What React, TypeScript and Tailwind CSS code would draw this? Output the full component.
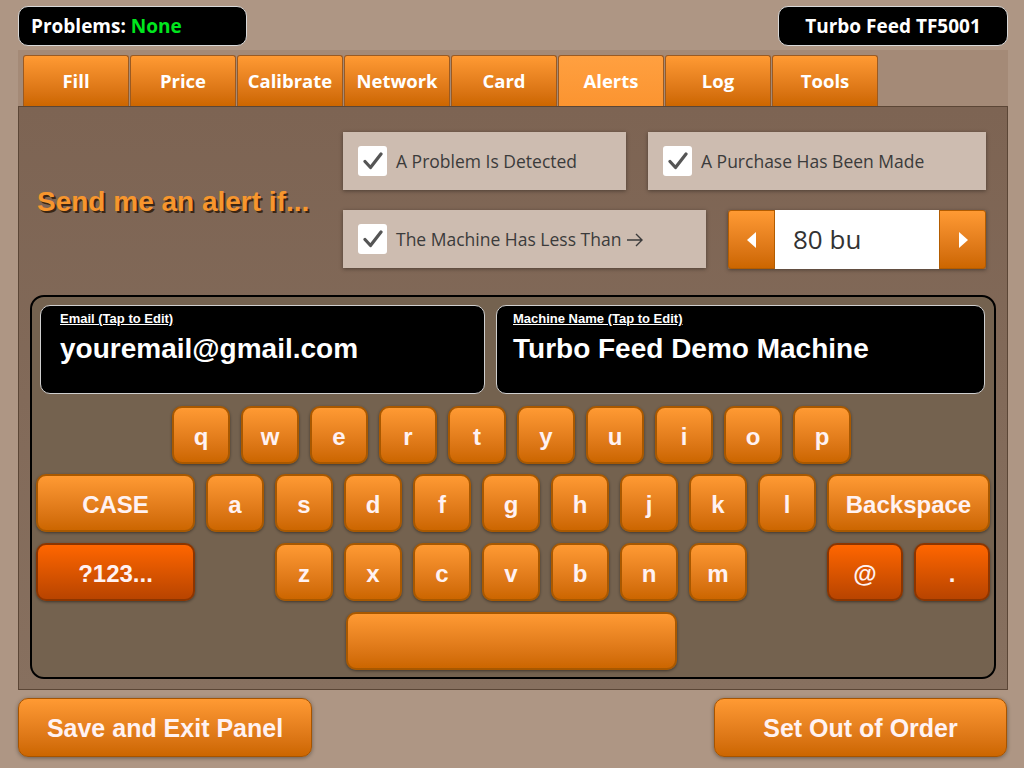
import React from "react";

const sego = { fontFamily: '"Open Sans", "Noto Sans", Arial, sans-serif' };
const arial = { fontFamily: '"Liberation Sans", Arial, sans-serif' };

function Key({ label, w = 58, red = false }: { label: string; w?: number; red?: boolean }) {
  return (
    <div
      style={{ width: w }}
      className={
        "h-[58px] shrink-0 rounded-[10px] border-2 flex items-center justify-center pt-[3px] text-[24px] font-bold text-[#fff2f2] shadow-[0_1px_3px_rgba(0,0,0,0.45)] " +
        (red
          ? "border-[#8c3500] bg-gradient-to-b from-[#ff6600] to-[#b84400]"
          : "border-[#a85800] bg-gradient-to-b from-[#ff9a33] to-[#cc6600]")
      }
    >
      {label}
    </div>
  );
}

function Spacer({ w }: { w: number }) {
  return <div style={{ width: w }} className="shrink-0" />;
}

function Check({ label, w, arrow = false }: { label: string; w: number; arrow?: boolean }) {
  return (
    <div
      style={{ width: w }}
      className="h-[58px] shrink-0 bg-[#cdbcb0] shadow-[0_1px_4px_rgba(0,0,0,0.4)] flex items-center pl-[15px] gap-[9px]"
    >
      <div className="w-[29px] h-[30px] bg-white rounded-[3px] flex items-center justify-center">
        <svg width="20" height="18" viewBox="0 0 20 18">
          <path d="M2 9.5 L7.5 15.5 L18 2" fill="none" stroke="#555" strokeWidth="3.2" strokeLinecap="round" strokeLinejoin="round" />
        </svg>
      </div>
      <span style={sego} className="text-[17.5px] text-[#3b3b3b] flex items-center">
        {label}
        {arrow && (
          <svg width="18" height="14" viewBox="0 0 18 14" className="ml-[5px] mt-[2px]">
            <path d="M1 7 H16 M10 1 L16 7 L10 13" fill="none" stroke="#3b3b3b" strokeWidth="1.4" />
          </svg>
        )}
      </span>
    </div>
  );
}

export default function App() {
  const tabs = ["Fill", "Price", "Calibrate", "Network", "Card", "Alerts", "Log", "Tools"];
  const row1 = ["q", "w", "e", "r", "t", "y", "u", "i", "o", "p"];
  const row2 = ["a", "s", "d", "f", "g", "h", "j", "k", "l"];
  const row3 = ["z", "x", "c", "v", "b", "n", "m"];
  return (
    <div className="w-[1024px] h-[768px] bg-[#ae9684] overflow-hidden flex flex-col" style={arial}>
      {/* top bar */}
      <div className="flex justify-between px-[18px] pt-[6px] pr-[16px]">
        <div style={sego} className="w-[229px] h-[40px] bg-black rounded-[10px] border border-[#d8d8d8] flex items-center pl-[12px] text-[19px] font-bold text-white">
          Problems:&nbsp;<span className="text-[#00e61e]">None</span>
        </div>
        <div style={sego} className="w-[230px] h-[40px] bg-black rounded-[10px] border border-[#d8d8d8] flex items-center justify-center text-[19px] font-bold text-white">
          Turbo Feed TF5001
        </div>
      </div>

      {/* frame */}
      <div className="mt-[4px] ml-[18px] w-[990px] h-[640px] bg-[#a48a77] flex flex-col">
        <div className="flex gap-[1px] pl-[5px] pt-[5px]">
          {tabs.map((t) => (
            <div
              key={t}
              style={sego}
              className={
                "w-[106px] h-[51px] rounded-t-[3px] border border-b-0 border-[#9a5a22] flex items-center justify-center text-[18.5px] font-bold text-white " +
                (t === "Alerts"
                  ? "bg-gradient-to-b from-[#ffa040] to-[#fb9430]"
                  : "bg-gradient-to-b from-[#ff9a33] to-[#cc6600]")
              }
            >
              {t}
            </div>
          ))}
        </div>
        <div className="flex-1 border border-[#5b4636] bg-gradient-to-b from-[#7d6453] to-[#87705f] flex flex-col">
          {/* alerts */}
          <div className="flex pt-[25px] pr-[21px]">
            <div className="w-[324px] flex items-center pl-[18px] pt-[2px]">
              <span className="text-[28px] font-bold text-[#f7962e] [text-shadow:2px_2px_0_#3a2614]">
                Send me an alert if...
              </span>
            </div>
            <div className="flex flex-col gap-[20px]">
              <div className="flex gap-[22px]">
                <Check label="A Problem Is Detected" w={283} />
                <Check label="A Purchase Has Been Made" w={338} />
              </div>
              <div className="flex gap-[22px]">
                <Check label="The Machine Has Less Than" w={363} arrow />
                <div className="w-[258px] h-[59px] flex shadow-[0_1px_4px_rgba(0,0,0,0.4)]">
                  <div className="w-[47px] rounded-l-[3px] border border-[#b35c00] bg-gradient-to-b from-[#ff9a33] to-[#cc6600] flex items-center justify-center">
                    <svg width="10" height="16" viewBox="0 0 10 16"><path d="M9 0 L0 8 L9 16 Z" fill="#fff" /></svg>
                  </div>
                  <div style={sego} className="flex-1 bg-white flex items-center pl-[18px] text-[26px] text-[#333]">
                    80 bu
                  </div>
                  <div className="w-[47px] rounded-r-[3px] border border-[#b35c00] bg-gradient-to-b from-[#ff9a33] to-[#cc6600] flex items-center justify-center">
                    <svg width="10" height="16" viewBox="0 0 10 16"><path d="M1 0 L10 8 L1 16 Z" fill="#fff" /></svg>
                  </div>
                </div>
              </div>
            </div>
          </div>

          {/* keyboard panel */}
          <div className="mt-[26px] mx-[11px] h-[384px] rounded-[14px] border-2 border-black bg-[#74624f] flex flex-col">
            <div className="flex gap-[11px] pt-[8px] pl-[8px]">
              <div className="w-[445px] h-[89px] bg-black rounded-[10px] border border-[#cfcfcf] pl-[19px] pt-[4px] text-white">
                <div className="text-[13px] font-bold underline leading-[18px]">Email (Tap to Edit)</div>
                <div className="text-[28px] font-bold leading-[34px] mt-[4px]">youremail@gmail.com</div>
              </div>
              <div className="w-[489px] h-[89px] bg-black rounded-[10px] border border-[#cfcfcf] pl-[16px] pt-[4px] text-white">
                <div className="text-[13px] font-bold underline leading-[18px]">Machine Name (Tap to Edit)</div>
                <div className="text-[28px] font-bold leading-[34px] mt-[4px]">Turbo Feed Demo Machine</div>
              </div>
            </div>
            <div className="flex flex-col pl-[4px] mt-[12px]">
              <div className="flex gap-[11px] pl-[136px]">
                {row1.map((k) => <Key key={k} label={k} />)}
              </div>
              <div className="flex gap-[11px] mt-[10px]">
                <Key label="CASE" w={159} />
                {row2.map((k) => <Key key={k} label={k} />)}
                <Key label="Backspace" w={163} />
              </div>
              <div className="flex gap-[11px] mt-[11px]">
                <Key label="?123..." w={159} red />
                <Spacer w={58} />
                {row3.map((k) => <Key key={k} label={k} />)}
                <Spacer w={58} />
                <Key label="@" w={76} red />
                <Key label="." w={76} red />
              </div>
              <div className="flex mt-[11px] pl-[310px]">
                <Key label="" w={331} />
              </div>
            </div>
          </div>
        </div>
      </div>

      {/* bottom buttons */}
      <div className="flex justify-between pl-[18px] pr-[17px] mt-[8px]">
        <div className="w-[294px] h-[59px] rounded-[10px] border border-[#a65400] bg-gradient-to-b from-[#ff9a33] to-[#cc6600] shadow-[0_1px_4px_rgba(0,0,0,0.4)] flex items-center justify-center pt-[2px] text-[25px] font-bold text-[#fff2f2]">
          Save and Exit Panel
        </div>
        <div className="w-[293px] h-[59px] rounded-[10px] border border-[#a65400] bg-gradient-to-b from-[#ff9a33] to-[#cc6600] shadow-[0_1px_4px_rgba(0,0,0,0.4)] flex items-center justify-center pt-[2px] text-[25px] font-bold text-[#fff2f2]">
          Set Out of Order
        </div>
      </div>
    </div>
  );
}
